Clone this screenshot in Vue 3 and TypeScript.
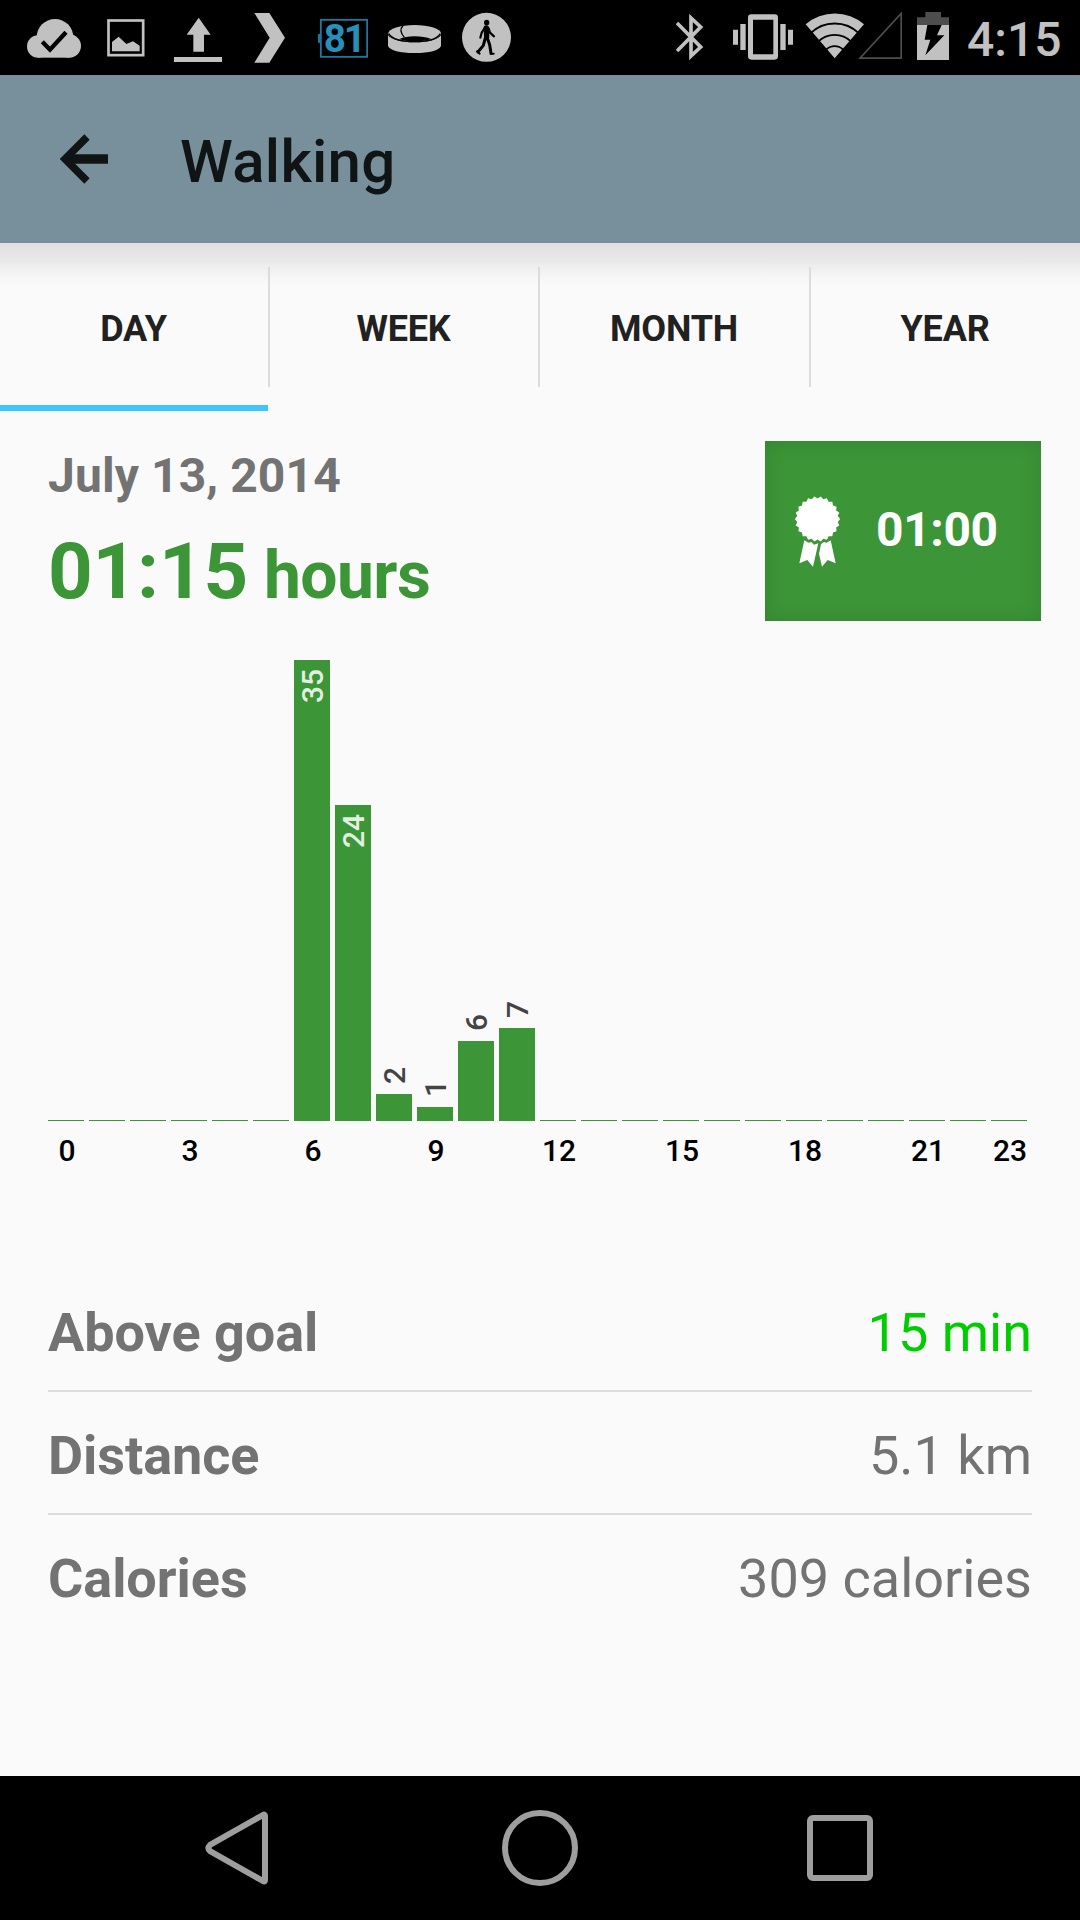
<script setup lang="ts">
interface Hour {
  hour: number
  minutes: number
}

interface Stat {
  label: string
  value: string
  highlight?: boolean
}

const tabs: string[] = ['DAY', 'WEEK', 'MONTH', 'YEAR']
const activeTab = 'DAY'

const recorded: Record<number, number> = { 6: 35, 7: 24, 8: 2, 9: 1, 10: 6, 11: 7 }
const hours: Hour[] = Array.from({ length: 24 }, (_, hour) => ({
  hour,
  minutes: recorded[hour] ?? 0,
}))
const peak = Math.max(...hours.map((h) => h.minutes))
const barHeight = (minutes: number): number => Math.round(1 + (460 * minutes) / peak)
const axisLabel = (hour: number): string => (hour % 3 === 0 || hour === 23 ? String(hour) : '')

const stats: Stat[] = [
  { label: 'Above goal', value: '15 min', highlight: true },
  { label: 'Distance', value: '5.1 km' },
  { label: 'Calories', value: '309 calories' },
]

// Toothed edge of the award rosette
const teeth = 22
const rosette = Array.from({ length: teeth * 2 }, (_, i) => {
  const r = i % 2 === 0 ? 68 : 61.5
  const a = ((i + 1) * Math.PI) / teeth - Math.PI / 2
  return `${(232.5 + r * Math.cos(a)).toFixed(1)},${(298 + r * Math.sin(a)).toFixed(1)}`
}).join(' ')
</script>

<template>
  <div class="screen">
    <header class="status">
      <svg class="cloud" viewBox="81 0 162 225">
        <circle cx="114.500" cy="139.500" r="33.500" />
        <circle cx="165" cy="112" r="55" />
        <circle cx="208" cy="138" r="35" />
        <rect x="114" y="120" width="94" height="53" />
        <polyline points="127,125 150,149 198,97" fill="none" stroke="#000" stroke-width="13" />
      </svg>
      <svg class="picture" viewBox="321 0 114 225">
        <rect x="325.500" y="61.500" width="104" height="104" fill="none" stroke="#c1c1c1" stroke-width="8" />
        <polygon points="336,126 356,110 379,132 399,124 419,137 419,154 336,154" />
      </svg>
      <svg class="upload" viewBox="522 0 144 225">
        <polygon points="596,53 632,104 612,104 612,155 580,155 580,104 560,104" />
        <rect x="522" y="171" width="144" height="15" />
      </svg>
      <svg class="chevron" viewBox="762 0 93 225">
        <polygon points="763,39 808,39 855,113 808,188 763,188 809,113" />
      </svg>
      <svg class="level" viewBox="84 0 150 225">
        <rect x="92.500" y="59.500" width="139" height="111" fill="none" stroke="#217799" stroke-width="5.500" />
        <rect x="84" y="101" width="7" height="28" rx="3" fill="#217799" />
        <text x="101" y="155" textLength="127">81</text>
      </svg>
      <svg class="band" viewBox="294 0 159 225">
        <ellipse cx="374" cy="100" rx="79" ry="25" />
        <path d="M294 106Q312 127 374 127T453 106V138Q443 159 374 159T294 138Z" />
        <path d="M328 117Q345 109 374 109T424 117Q404 124 374 124T328 117Z" fill="#000" />
        <path d="M296 101Q311 125 374 125T451 101" fill="none" stroke="#000" stroke-width="4" />
        <path d="M339 77Q325 91 343 112" fill="none" stroke="#000" stroke-width="4" />
      </svg>
      <svg class="walker" viewBox="516 0 147 225">
        <circle cx="589.500" cy="112" r="73.500" />
        <g fill="none" stroke="#000" stroke-linecap="round" stroke-linejoin="round">
          <path d="M590 67V68" stroke-width="16" />
          <path d="M589 84L590 110" stroke-width="16" />
          <path d="M584 84L575 98L571 113M596 85L600 98L612 109" stroke-width="6.500" />
          <path d="M586 114L580 136L564 156M592 114L599 134L603 160" stroke-width="9" />
          <path d="M561 154L569 161M602 161H611" stroke-width="6" />
        </g>
      </svg>

      <svg class="bluetooth" viewBox="48 0 84 225">
        <path d="M51 69L122 141L93 168V54L122 81L51 153" fill="none" stroke="#c1c1c1" stroke-width="11" />
      </svg>
      <svg class="vibrate" viewBox="219 0 180 225">
        <path fill-rule="evenodd" d="M274 43H344Q354 43 354 53V169Q354 179 344 179H274Q264 179 264 169V53Q264 43 274 43ZM279 59V163H340V59Z" />
        <path d="M241 72H257V150H241ZM219 89H234V134H219ZM361 72H377V150H361ZM384 89H399V134H384Z" />
      </svg>
      <svg class="wifi" viewBox="435 0 177 225">
        <path d="M524 175L437 73A134 134 0 0 1 612 73Z" />
        <g fill="none" stroke="#000" stroke-width="5.500">
          <circle cx="524" cy="175" r="104.500" />
          <circle cx="524" cy="175" r="70.500" />
          <circle cx="524" cy="175" r="36.500" />
        </g>
      </svg>
      <svg class="signal" viewBox="594 0 132 225">
        <path d="M723.500 40V174.500H600Z" fill="none" stroke="#4d4d4d" stroke-width="5" />
      </svg>
      <svg class="battery" viewBox="771 0 96 225">
        <path d="M771 52H796V36H843V52H867V76H771Z" fill="#4d4d4d" />
        <rect x="771" y="75" width="96" height="105" />
        <polygon points="802,75 845,75 831,106 853,106 796,166 811,119 794,119" fill="#000" />
      </svg>
      <span class="clock">4:15</span>
    </header>

    <div class="appbar">
      <svg class="back" viewBox="0 0 48 50">
        <path d="M27 3L5 25L27 47M5 25H48" fill="none" stroke="#101415" stroke-width="7.500" />
        <path d="M5 25H48" stroke="#101415" stroke-width="9.500" />
      </svg>
      <h1>Walking</h1>
    </div>

    <nav class="tabs">
      <div v-for="tab in tabs" :key="tab" class="tab" :class="{ active: tab === activeTab }">
        <span>{{ tab }}</span>
      </div>
    </nav>

    <main>
      <section class="summary">
        <div>
          <div class="date">July 13, 2014</div>
          <div class="total">01:15<span class="unit">hours</span></div>
        </div>
        <div class="goal">
          <svg class="award" viewBox="165 229 135 213">
            <polygon :points="rosette" />
            <polygon points="193,362 205,369 214,367 222,375 235,371 219,441 202,421 178,431" />
            <polygon points="243,373 252,367 260,369 272,362 287,431 263,421 246,441 237,402" />
          </svg>
          <span>01:00</span>
        </div>
      </section>

      <section class="chart">
        <div v-for="h in hours" :key="h.hour" class="column">
          <span v-if="h.minutes > 0 && h.minutes < 20" class="count">{{ h.minutes }}</span>
          <div class="bar" :style="{ height: barHeight(h.minutes) + 'px' }">
            <span v-if="h.minutes >= 20" class="count inside">{{ h.minutes }}</span>
          </div>
          <span class="tick">{{ axisLabel(h.hour) }}</span>
        </div>
      </section>

      <section class="stats">
        <div v-for="s in stats" :key="s.label" class="row">
          <span class="label">{{ s.label }}</span>
          <span class="value" :class="{ highlight: s.highlight }">{{ s.value }}</span>
        </div>
      </section>
    </main>

    <footer class="navbar">
      <svg class="nav-back" viewBox="0 0 64 74">
        <path d="M60 5.500Q60 2 57 4.500L5 34Q2 37 5 40L57 69.500Q60 72 60 68.500Z" />
      </svg>
      <svg class="nav-home" viewBox="0 0 76 76">
        <circle cx="38" cy="38" r="35" />
      </svg>
      <svg class="nav-recent" viewBox="0 0 66 66">
        <rect x="3" y="3" width="60" height="60" rx="3" />
      </svg>
    </footer>
  </div>
</template>

<style>
body {
  margin: 0;
}
</style>

<style scoped>
.screen {
  display: flex;
  flex-direction: column;
  width: 1080px;
  height: 1920px;
  overflow: hidden;
  background: #fafafa;
  font-family: Roboto, "Liberation Sans", sans-serif;
}

svg {
  display: block;
  flex: none;
}

.status {
  display: flex;
  flex: none;
  height: 75px;
  background: #000;
}
.status svg {
  height: 75px;
  fill: #c1c1c1;
}
.cloud { width: 54px; margin-left: 27px; }
.picture { width: 38px; margin-left: 26px; }
.upload { width: 48px; margin-left: 29px; }
.chevron { width: 31px; margin-left: 32px; }
.level { width: 50px; margin-left: 33px; }
.level text { font-size: 116px; font-weight: 700; fill: #2790b8; }
.band { width: 53px; margin-left: 20px; }
.walker { width: 49px; margin-left: 21px; }
.bluetooth { width: 28px; margin-left: 165px; }
.vibrate { width: 60px; margin-left: 29px; }
.wifi { width: 59px; margin-left: 12px; }
.signal { width: 44px; margin-left: -6px; }
.battery { width: 32px; margin-left: 15px; }
.clock {
  margin-left: 18px;
  font-size: 48px;
  font-weight: 500;
  line-height: 80px;
  color: #c1c1c1;
}

.appbar {
  display: flex;
  flex: none;
  height: 168px;
  background: #78909c;
}
.back {
  width: 48px;
  height: 50px;
  margin: 59px 72px 0 60px;
}
h1 {
  margin: 0;
  font-size: 60px;
  font-weight: 500;
  letter-spacing: 0.3px;
  line-height: 174px;
  color: #101415;
}

.tabs {
  display: flex;
  flex: none;
  height: 168px;
  background: linear-gradient(#dfdfdf, #e9e9e9 18px, #f6f6f6 34px, #fafafa 43px);
}
.tab {
  flex: none;
  display: flex;
  flex-direction: column;
  box-sizing: border-box;
  width: 268px;
  border-bottom: 6px solid transparent;
}
.tab:nth-child(n + 3) {
  width: 269px;
}
.tab.active {
  border-bottom-color: #40c4ff;
}
.tab span {
  height: 120px;
  margin-top: 24px;
  padding-right: 1px;
  font-size: 36px;
  font-weight: 700;
  letter-spacing: -0.2px;
  line-height: 124px;
  text-align: center;
  color: #212121;
}
.tab + .tab {
  margin-left: 2px;
}
.tab + .tab span {
  margin-left: -2px;
  border-left: 2px solid #dcdcdc;
}

main {
  flex: 1;
}
.summary {
  display: flex;
  justify-content: space-between;
  height: 180px;
  padding: 30px 39px 0 48px;
}
.date {
  padding-top: 7px;
  font-size: 48px;
  font-weight: 700;
  letter-spacing: 0.1px;
  line-height: 56px;
  color: #737373;
}
.total {
  font-size: 78px;
  font-weight: 700;
  letter-spacing: -0.2px;
  line-height: 92px;
  margin-top: 22px;
  color: #3c9537;
}
.unit {
  margin-left: 16px;
  font-size: 66px;
  letter-spacing: -0.6px;
}
.goal {
  display: flex;
  align-items: center;
  box-sizing: border-box;
  width: 276px;
  height: 180px;
  padding: 0 0 3px 30px;
  background: #3c9537;
  box-shadow: inset 0 0 20px rgba(0, 0, 0, 0.12);
  font-size: 48px;
  font-weight: 700;
  letter-spacing: -0.4px;
  color: #fff;
}
.award {
  width: 45px;
  height: 71px;
  margin: 4px 36px 0 0;
  fill: #fff;
}

.chart {
  display: flex;
  gap: 5px;
  height: 510px;
  margin: 39px 53px 0 48px;
}
.column {
  display: flex;
  flex-direction: column;
  justify-content: flex-end;
  width: 36px;
}
.bar {
  background: #3c9537;
}
.count {
  width: 36px;
  margin-bottom: 10px;
  writing-mode: vertical-rl;
  transform: rotate(180deg);
  font-size: 30px;
  font-weight: 500;
  line-height: 37px;
  color: #444;
}
.count.inside {
  display: block;
  height: fit-content;
  margin: 9px 0 0;
  color: #e2efe1;
}
.tick {
  display: flex;
  justify-content: center;
  width: 38px;
  height: 49px;
  font-size: 30px;
  font-weight: 500;
  line-height: 60px;
  color: #000;
}

.stats {
  margin: 99px 48px 0;
}
.row {
  display: flex;
  justify-content: space-between;
  height: 121px;
  font-size: 54px;
  line-height: 127px;
  color: #737373;
}
.row + .row {
  border-top: 2px solid #dcdcdc;
}
.label {
  font-weight: 700;
  letter-spacing: -0.05px;
}
.value.highlight {
  color: #00cc00;
}

.navbar {
  display: flex;
  flex: none;
  align-items: center;
  height: 144px;
  background: #000;
}
.navbar svg {
  fill: none;
  stroke: #9e9e9e;
  stroke-width: 6;
}
.nav-back { width: 64px; height: 74px; margin-left: 205px; }
.nav-home { width: 76px; height: 76px; margin-left: 233px; }
.nav-recent { width: 66px; height: 66px; margin-left: 229px; }
</style>
